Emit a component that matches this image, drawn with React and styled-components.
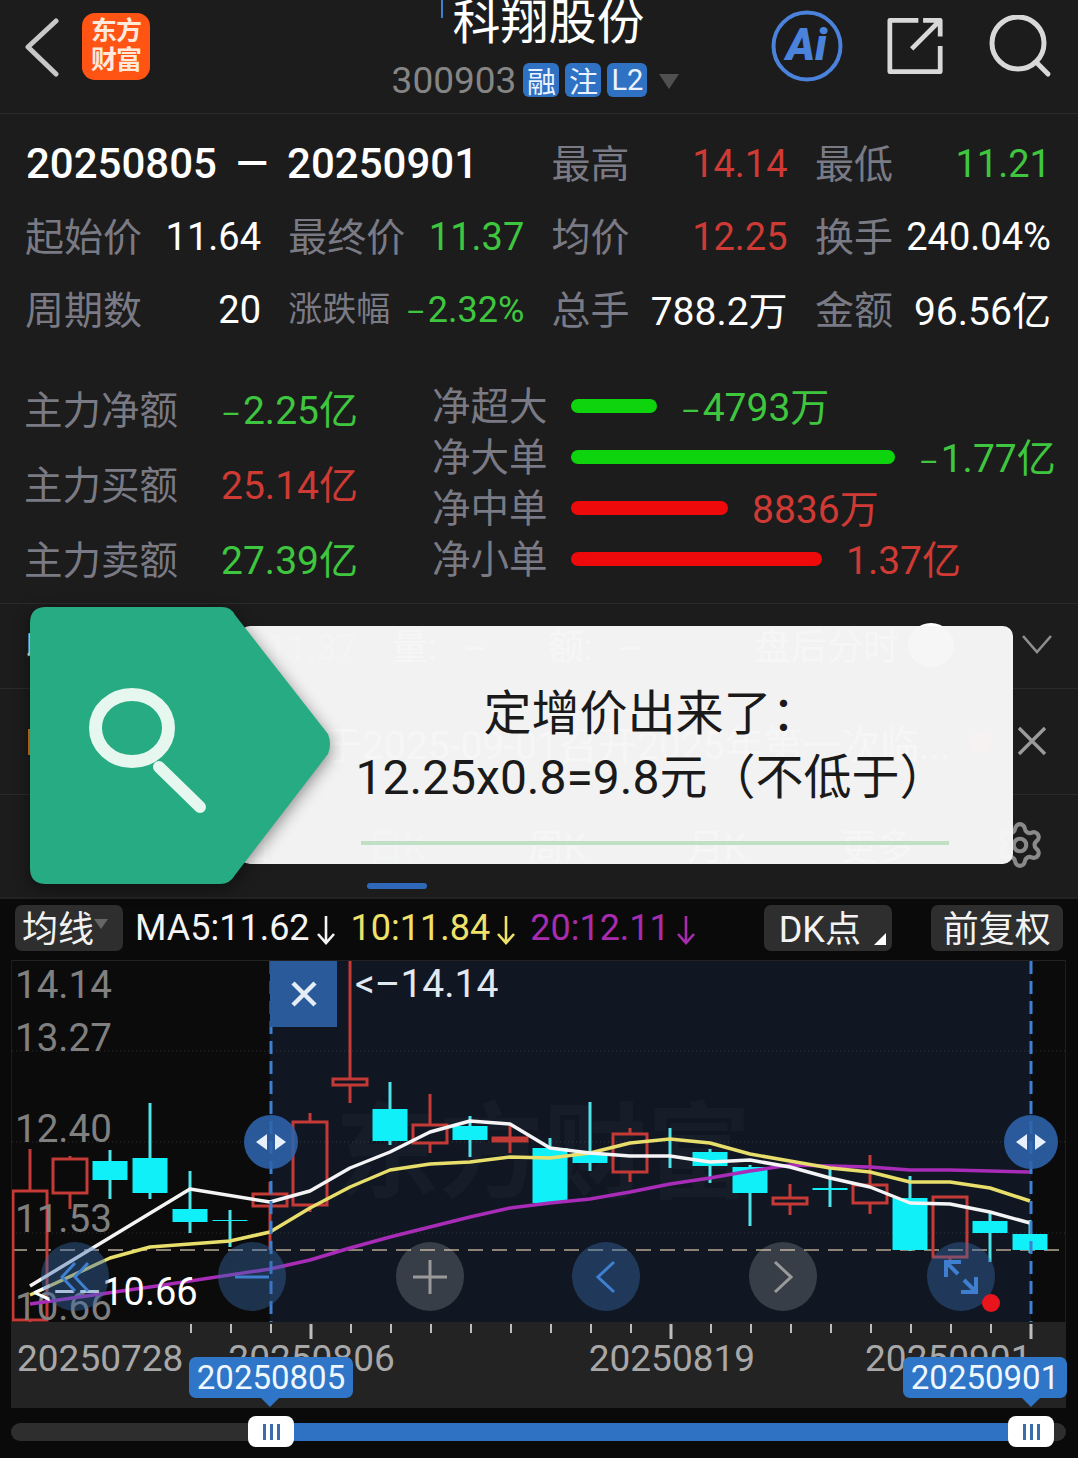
import React from 'react'
import styled, { createGlobalStyle } from 'styled-components'
import { Settings } from 'lucide-react'

const GlobalStyle = createGlobalStyle`
  html, body { margin: 0; padding: 0; background: #0a0a0a; }
  * { box-sizing: border-box; }
`

const RED = '#cf3a34'
const GREEN = '#3fc63f'
const LABEL = '#7a7a85'

const Page = styled.div`
  position: relative;
  width: 1078px;
  height: 1458px;
  overflow: hidden;
  background: #0a0a0a;
  color: #fff;
  font-family: Roboto, "Noto Sans CJK SC", sans-serif;
`

/* top bar */
const Header = styled.header`
  display: grid;
  grid-template-columns: 392px 289px 1fr;
  height: 114px;
  background: #1c1c1c;
  border-bottom: 1px solid #2b2b2b;
`
const HeaderLeft = styled.div`
  display: flex;
  align-items: flex-start;
  padding: 13px 0 0 24px;
  gap: 23px;
`
const Logo = styled.div`
  width: 68px;
  height: 67px;
  border-radius: 13px;
  background: #ff5414;
  color: #ffe9dc;
  font-size: 26px;
  line-height: 29px;
  font-weight: 700;
  text-align: center;
  padding-top: 4px;
  letter-spacing: -1px;
`
const HeaderCenter = styled.div`
  display: flex;
  flex-direction: column;
  align-items: center;
`
const Title = styled.div`
  position: relative;
  font-size: 48px;
  line-height: 46px;
  height: 44px;
  margin-left: 24px;
  color: #fff;
  &::before {
    content: '';
    position: absolute;
    left: -11px;
    top: 0;
    width: 2px;
    height: 18px;
    background: #3f7fd0;
  }
`
const CodeRow = styled.div`
  display: flex;
  align-items: center;
  gap: 6px;
  margin: 19px 2px 0 0;
  height: 34px;
`
const Code = styled.span`
  font-size: 37px;
  color: #858585;
  margin-right: 1px;
`
const Badge = styled.span`
  display: flex;
  align-items: center;
  justify-content: center;
  width: ${p => p.$w || 36}px;
  height: 34px;
  border-radius: 6px;
  background: #2f72c4;
  color: #eaf3ff;
  font-size: 29px;
`
const DownTriangle = styled.span`
  width: 0;
  height: 0;
  margin: 2px 0 0 6px;
  border-left: 10px solid transparent;
  border-right: 10px solid transparent;
  border-top: 15px solid #505050;
`
const HeaderRight = styled.div`
  display: flex;
  align-items: flex-start;
  gap: 44px;
  padding: 10px 0 0 90px;
`

/* range summary */
const Stats = styled.section`
  display: grid;
  grid-template-columns: repeat(4, 236px);
  grid-auto-rows: 73px;
  column-gap: 27.3px;
  height: 233px;
  padding: 13px 0 0 25px;
  background: #1c1c1c;
`
const DateRange = styled.div`
  grid-column: span 2;
  display: flex;
  align-items: center;
  padding-left: 1px;
  font-size: 42px;
  font-weight: 500;
  white-space: pre;
  word-spacing: -1px;
`
const Stat = styled.div`
  display: flex;
  align-items: center;
  justify-content: space-between;
  font-size: 38px;
  white-space: nowrap;
`
const Label = styled.span`
  padding-bottom: 6px;
  color: ${LABEL};
  font-size: ${p => p.$size || 39}px;
`
const Value = styled.span`
  padding-bottom: ${p => p.$lift || 0}px;
  color: ${p => p.$color || '#fff'};
  font-size: ${p => p.$size ? `${p.$size}px` : 'inherit'};
`
const Dash = styled.span`
  font-size: 30px;
  margin-right: 2px;
`

/* capital flow */
const Flow = styled.section`
  display: grid;
  grid-template-columns: 408px 1fr;
  height: 256px;
  padding: 25px 0 0 24px;
  background: #1c1c1c;
  font-size: 39px;
`
const FlowLeft = styled.div`
  display: grid;
  grid-auto-rows: 75px;
  width: 334px;
`
const FlowRight = styled.div`
  display: grid;
  grid-auto-rows: 51px;
  margin-top: 8px;
`
const FlowRow = styled.div`
  display: flex;
  align-items: center;
  justify-content: ${p => p.$spread ? 'space-between' : 'flex-start'};
  white-space: nowrap;
`
const FlowLabel = styled(Label)`
  width: 139px;
`
const Bar = styled.span`
  width: ${p => p.$w}px;
  height: 14px;
  margin-right: 24px;
  border-radius: 7px;
  background: ${p => p.$up ? '#ee0a0a' : '#0ed40e'};
`

/* rows behind the note */
const InfoRow = styled.div`
  display: flex;
  align-items: center;
  height: ${p => p.$h}px;
  padding-left: 25px;
  background: #1c1c1c;
  border-top: 1px solid #2b2b2b;
  font-size: 36px;
  color: #e6e6e6;
  white-space: nowrap;
`
const InfoCell = styled.span`
  display: flex;
  align-items: baseline;
  justify-content: space-between;
  width: ${p => p.$w}px;
  margin-left: ${p => p.$ml || 0}px;
  padding-bottom: 5px;
`
const ToggleKnob = styled.span`
  width: 46px;
  height: 44px;
  margin: 0 0 2px 9px;
  border-radius: 50%;
  background: #fff;
`
const NewsTag = styled.span`
  width: 60px;
  height: 26px;
  margin-left: 3px;
  background: #d8741c;
`
const NewsText = styled.span`
  margin-left: 196px;
  width: 668px;
  overflow: hidden;
  font-size: 39px;
`
const NewsDot = styled.span`
  width: 22px;
  height: 22px;
  margin-left: 17px;
  border-radius: 50%;
  background: #e02a2a;
`
const EndIcon = styled.span`
  display: flex;
  margin-left: ${p => p.$ml}px;
  padding-bottom: ${p => p.$pb || 0}px;
`
const TabRow = styled(InfoRow)`
  height: 103px;
  padding: 0;
  align-items: stretch;
`
const Tab = styled.div`
  position: relative;
  display: flex;
  align-items: center;
  justify-content: center;
  width: ${p => p.$w || 160}px;
  padding-bottom: 4px;
  color: ${p => p.$active ? '#3f7fd0' : '#d8d8d8'};
  &::after {
    content: '';
    display: ${p => p.$active ? 'block' : 'none'};
    position: absolute;
    left: 50px;
    bottom: 8px;
    width: 60px;
    height: 6px;
    border-radius: 3px;
    background: #2f68b8;
  }
`
const GearWrap = styled.div`
  display: flex;
  align-items: center;
  margin-left: 38px;
  padding-bottom: 2px;
  color: #8a8a8a;
`

/* indicator toolbar */
const Toolbar = styled.div`
  display: flex;
  align-items: flex-start;
  height: 63px;
  padding: 6px 15px 0 15px;
  background: #0a0a0a;
  border-top: 2px solid #222;
  font-size: 36px;
`
const ToolButton = styled.div`
  position: relative;
  display: flex;
  align-items: center;
  justify-content: center;
  width: ${p => p.$w}px;
  height: 46px;
  margin-left: ${p => p.$ml || 0}px;
  padding: 0 ${p => p.$pr || 0}px 4px 0;
  border-radius: 7px;
  background: #2e2e2e;
  color: #f2f2f2;
`
const CornerMark = styled.span`
  position: absolute;
  right: 6px;
  bottom: 6px;
  width: 0;
  height: 0;
  border-left: 12px solid transparent;
  border-bottom: 12px solid #fff;
`
const SelectMark = styled.span`
  width: 0;
  height: 0;
  margin: 0 0 4px 0;
  border-left: 7px solid transparent;
  border-right: 7px solid transparent;
  border-top: 10px solid #666;
`
const MaValue = styled.span`
  display: flex;
  align-items: center;
  height: 46px;
  margin-left: ${p => p.$ml}px;
  color: ${p => p.$color};
  white-space: nowrap;
`

/* candle chart */
const Chart = styled.div`
  position: relative;
  width: 1055px;
  height: 362px;
  margin-left: 11px;
  background: #0b0b0b;
  border-top: 1px solid #222;
  border-right: 1px solid #1d1d1d;
  border-left: 1px solid #1d1d1d;
`
const ChartSvg = styled.svg`
  display: block;
  position: absolute;
  left: 0;
  top: 0;
  font-family: Roboto, "Noto Sans CJK SC", sans-serif;
`
const CloseBox = styled.div`
  position: absolute;
  left: 258px;
  top: 0;
  width: 67px;
  height: 66px;
  display: flex;
  align-items: center;
  justify-content: center;
  background: #2a5a9a;
`
const Handle = styled.div`
  position: absolute;
  left: ${p => p.$x - 27 - 12}px;
  top: 154px;
  width: 54px;
  height: 54px;
  display: flex;
  align-items: center;
  justify-content: center;
  border-radius: 50%;
  background: rgba(46, 100, 172, 0.88);
`
const RoundButton = styled.div`
  position: absolute;
  left: ${p => p.$x - 34 - 12}px;
  top: 281px;
  width: 68px;
  height: 69px;
  display: flex;
  align-items: center;
  justify-content: center;
  border-radius: 50%;
  background: ${p => p.$blue ? 'rgba(55, 105, 170, 0.42)' : 'rgba(255, 255, 255, 0.17)'};
`
const RedDot = styled.span`
  position: absolute;
  left: 970px;
  top: 333px;
  width: 18px;
  height: 18px;
  border-radius: 50%;
  background: #e8161c;
`

/* date axis */
const Axis = styled.div`
  position: relative;
  width: 1055px;
  height: 86px;
  margin-left: 11px;
  background: #232323;
`
const Ticks = styled.svg`
  display: block;
`
const AxisLabels = styled.div`
  display: flex;
  font-size: 37px;
  line-height: 37px;
  color: #a8a8a8;
`
const AxisLabel = styled.span`
  margin-left: ${p => p.$ml}px;
`
const DateTag = styled.div`
  position: absolute;
  left: ${p => p.$x - 11}px;
  top: 35px;
  width: 164px;
  height: 41px;
  display: flex;
  align-items: center;
  justify-content: center;
  border-radius: 7px;
  background: #2f76c8;
  color: #eef6ff;
  font-size: 33px;
  &::after {
    content: '';
    position: absolute;
    left: ${p => p.$tip}px;
    top: 41px;
    width: 0;
    height: 0;
    border-left: 9px solid transparent;
    border-right: 9px solid transparent;
    border-top: 9px solid #2f76c8;
  }
`

/* range slider */
const SliderArea = styled.div`
  height: 50px;
  padding: 15px 0 0 11px;
`
const Track = styled.div`
  position: relative;
  width: 1055px;
  height: 18px;
  border-radius: 9px;
  background: #2e2e2e;
`
const TrackFill = styled.div`
  position: absolute;
  left: 259px;
  top: 0;
  width: 761px;
  height: 18px;
  background: #2f72c4;
`
const Thumb = styled.div`
  position: absolute;
  left: ${p => p.$x}px;
  top: -7px;
  width: 46px;
  height: 31px;
  display: flex;
  align-items: center;
  justify-content: center;
  gap: 4px;
  border-radius: 8px;
  background: #fff;
  span {
    width: 3px;
    height: 16px;
    background: #3a6ea8;
  }
`

/* pinned note */
const NoteCard = styled.div`
  position: absolute;
  left: 240px;
  top: 626px;
  width: 773px;
  height: 238px;
  padding: 56px 0 0 50px;
  display: flex;
  flex-direction: column;
  align-items: center;
  border-radius: 10px;
  background: rgba(246, 246, 246, 0.985);
  color: #1a1a1a;
  font-size: 48px;
  line-height: 64px;
  white-space: nowrap;
`
const NoteRule = styled.div`
  width: 588px;
  height: 4px;
  margin: 31px 0 0 6px;
  background: #bfe0c4;
`
const NoteBadge = styled.svg`
  position: absolute;
  left: 20px;
  top: 597px;
  filter: drop-shadow(0 4px 8px rgba(0, 0, 0, 0.45));
`

const candles = [
  { c: 30, top: 1191, bot: 1320, hi: 1149, lo: 1323, up: true },
  { c: 70, top: 1159, bot: 1193, hi: 1156, lo: 1209, up: true },
  { c: 110, top: 1161, bot: 1180, hi: 1150, lo: 1199 },
  { c: 150, top: 1158, bot: 1193, hi: 1103, lo: 1199 },
  { c: 190, top: 1209, bot: 1222, hi: 1171, lo: 1233 },
  { c: 230, top: 1220, bot: 1221, hi: 1210, lo: 1247 },
  { c: 270, top: 1194, bot: 1206, hi: 1182, lo: 1250, up: true },
  { c: 310, top: 1122, bot: 1205, hi: 1113, lo: 1212, up: true },
  { c: 350, top: 1079, bot: 1085, hi: 961, lo: 1103, up: true },
  { c: 390, top: 1109, bot: 1141, hi: 1082, lo: 1145 },
  { c: 430, top: 1125, bot: 1143, hi: 1094, lo: 1153, up: true },
  { c: 470, top: 1126, bot: 1140, hi: 1116, lo: 1157 },
  { c: 510, top: 1138, bot: 1141, hi: 1125, lo: 1153, up: true },
  { c: 550, top: 1148, bot: 1203, hi: 1138, lo: 1203 },
  { c: 590, top: 1153, bot: 1163, hi: 1102, lo: 1171 },
  { c: 630, top: 1134, bot: 1172, hi: 1128, lo: 1182, up: true },
  { c: 670, top: 1140, bot: 1140, hi: 1128, lo: 1168, thin: true },
  { c: 710, top: 1152, bot: 1166, hi: 1149, lo: 1183 },
  { c: 750, top: 1167, bot: 1193, hi: 1165, lo: 1226 },
  { c: 790, top: 1198, bot: 1204, hi: 1184, lo: 1215, up: true },
  { c: 830, top: 1188, bot: 1190, hi: 1169, lo: 1207 },
  { c: 870, top: 1185, bot: 1203, hi: 1155, lo: 1214, up: true },
  { c: 910, top: 1198, bot: 1250, hi: 1176, lo: 1251 },
  { c: 950, top: 1197, bot: 1257, hi: 1197, lo: 1262, up: true },
  { c: 990, top: 1221, bot: 1233, hi: 1213, lo: 1262 },
  { c: 1030, top: 1234, bot: 1250, hi: 1220, lo: 1253 },
]

const ma5 = '30,1286 190,1189 270,1202 310,1191 350,1168 390,1152 430,1132 470,1121 510,1124 550,1148 590,1153 630,1156 670,1156 710,1162 750,1160 790,1167 830,1178 870,1187 910,1203 950,1204 990,1212 1030,1223'
const ma10 = '30,1295 110,1258 150,1247 230,1241 270,1232 310,1208 350,1187 390,1170 430,1164 470,1162 510,1157 550,1158 590,1153 630,1143 670,1139 710,1143 750,1154 790,1161 830,1168 870,1172 910,1182 950,1182 990,1188 1030,1201'
const ma20 = '30,1304 150,1287 270,1269 310,1260 350,1248 390,1237 430,1227 470,1217 510,1208 550,1203 590,1199 630,1192 670,1184 710,1178 750,1171 790,1165 830,1166 870,1167 910,1170 950,1170 990,1171 1030,1172'

const priceLabels = [
  ['14.14', 998],
  ['13.27', 1051],
  ['12.40', 1142],
  ['11.53', 1232],
  ['10.66', 1320],
]

const Candle = ({ c, top, bot, hi, lo, up, thin }) => {
  const wick = up ? '#c43a36' : '#4fe3ea'
  return (
    <g>
      <line x1={c} x2={c} y1={hi} y2={top} stroke={wick} strokeWidth="3" />
      <line x1={c} x2={c} y1={bot} y2={lo} stroke={wick} strokeWidth="3" />
      {up && <rect x={c - 17} y={top} width="34" height={bot - top} fill="none" stroke={wick} strokeWidth="3" />}
      {!up && !thin && <rect x={c - 17.5} y={top} width="35" height={bot - top} fill="#0ff0f8" />}
    </g>
  )
}

const ArrowDown = ({ color }) => (
  <svg width="20" height="32" viewBox="0 0 20 32" style={{ margin: '4px 3px 0 6px' }}>
    <path d="M10 2V29M2 20l8 9 8-9" fill="none" stroke={color} strokeWidth="2.6" />
  </svg>
)

const HandleIcon = () => (
  <svg width="30" height="16" viewBox="0 0 30 16">
    <path d="M11 0V16L0 8ZM19 0V16L30 8Z" fill="#e8f1fb" />
  </svg>
)

const ChartDrawing = () => (
  <ChartSvg width="1053" height="361" viewBox="12 961 1053 361">
    <rect x="270" y="961" width="761" height="361" fill="#101722" />
    <text x="335" y="1190" fontSize="104" fontWeight="700" fill="#ffffff" fillOpacity="0.026">东方财富</text>
    {[1051, 1142, 1233].map(y => (
      <line key={y} x1="12" x2="1065" y1={y} y2={y} stroke="#fff" strokeOpacity="0.14" strokeDasharray="1 3" />
    ))}
    <line x1="12" x2="1065" y1="1250" y2="1250" stroke="#8d8375" strokeWidth="2" strokeDasharray="15 9" />
    {candles.map(item => <Candle key={item.c} {...item} />)}
    <line x1="670" x2="670" y1="1140" y2="1141" stroke="#4fe3ea" strokeWidth="3" />
    <g fontSize="38.6" fill="#808080">
      {priceLabels.map(([text, y]) => <text key={text} x="15" y={y}>{text}</text>)}
    </g>
    <polyline points={ma20} fill="none" stroke="#a82cb8" strokeWidth="3.5" strokeLinejoin="round" />
    <polyline points={ma10} fill="none" stroke="#e8de6c" strokeWidth="3.5" strokeLinejoin="round" />
    <polyline points={ma5} fill="none" stroke="#f4f4f6" strokeWidth="3.5" strokeLinejoin="round" />
    <text x="355" y="997" fontSize="39" fill="#e2e8f0">{'<–14.14'}</text>
    <text x="33" y="1305" fontSize="38" fill="#fff">{'<––10.66'}</text>
    <g stroke="#3f7fd0" strokeWidth="3" strokeDasharray="13 7">
      <line x1="271" x2="271" y1="961" y2="1322" />
      <line x1="1031" x2="1031" y1="961" y2="1322" />
    </g>
  </ChartSvg>
)

const tickXs = Array.from({ length: 22 }, (_, i) => 191 + i * 40)

export default function App() {
  return (
    <Page>
      <GlobalStyle />
      <Header>
        <HeaderLeft>
          <svg width="35" height="60" viewBox="0 0 35 60" style={{ marginTop: 5 }}>
            <path d="M32 3L4 29L32 56" fill="none" stroke="#c8c8c8" strokeWidth="5" strokeLinecap="round" strokeLinejoin="round" />
          </svg>
          <Logo>东方<br />财富</Logo>
        </HeaderLeft>
        <HeaderCenter>
          <Title>科翔股份</Title>
          <CodeRow>
            <Code>300903</Code>
            <Badge>融</Badge>
            <Badge>注</Badge>
            <Badge $w={40}>L2</Badge>
            <DownTriangle />
          </CodeRow>
        </HeaderCenter>
        <HeaderRight>
          <svg width="72" height="72" viewBox="0 0 72 72">
            <circle cx="36" cy="36" r="33.5" fill="none" stroke="#4a82dc" strokeWidth="4" />
            <text x="15" y="50" fontSize="44" fontWeight="900" fontStyle="italic" fill="#4a82dc" fontFamily="Roboto, sans-serif">Ai</text>
          </svg>
          <svg width="57" height="58" viewBox="0 0 60 60" style={{ marginTop: 7 }}>
            <path d="M33 3H3V57H56V30M26 33L55 4M38 3H56V20" fill="none" stroke="#d8d8d8" strokeWidth="5" strokeLinejoin="round" />
          </svg>
          <svg width="66" height="66" viewBox="0 0 66 66" style={{ marginTop: 5 }}>
            <circle cx="30" cy="28" r="26" fill="none" stroke="#d8d8d8" strokeWidth="5" />
            <path d="M48 47L60 59" stroke="#d8d8d8" strokeWidth="5" strokeLinecap="round" />
          </svg>
        </HeaderRight>
      </Header>

      <Stats>
        <DateRange>20250805  —  20250901</DateRange>
        <Stat><Label>最高</Label><Value $color={RED}>14.14</Value></Stat>
        <Stat><Label>最低</Label><Value $color={GREEN}>11.21</Value></Stat>
        <Stat><Label>起始价</Label><Value>11.64</Value></Stat>
        <Stat><Label>最终价</Label><Value $color={GREEN}>11.37</Value></Stat>
        <Stat><Label>均价</Label><Value $color={RED}>12.25</Value></Stat>
        <Stat><Label>换手</Label><Value>240.04%</Value></Stat>
        <Stat><Label>周期数</Label><Value>20</Value></Stat>
        <Stat><Label $size={34}>涨跌幅</Label><Value $color={GREEN} $size={36}><Dash>–</Dash>2.32%</Value></Stat>
        <Stat><Label>总手</Label><Value $size={39} $lift={4}>788.2万</Value></Stat>
        <Stat><Label>金额</Label><Value $size={39} $lift={4}>96.56亿</Value></Stat>
      </Stats>

      <Flow>
        <FlowLeft>
          <FlowRow $spread><Label $size={38.5}>主力净额</Label><Value $color={GREEN} $lift={6}><Dash>–</Dash>2.25亿</Value></FlowRow>
          <FlowRow $spread><Label $size={38.5}>主力买额</Label><Value $color={RED} $lift={6}>25.14亿</Value></FlowRow>
          <FlowRow $spread><Label $size={38.5}>主力卖额</Label><Value $color={GREEN} $lift={6}>27.39亿</Value></FlowRow>
        </FlowLeft>
        <FlowRight>
          <FlowRow><FlowLabel $size={38.5}>净超大</FlowLabel><Bar $w={86} /><Value $color={GREEN} $lift={4}><Dash>–</Dash>4793万</Value></FlowRow>
          <FlowRow><FlowLabel $size={38.5}>净大单</FlowLabel><Bar $w={324} /><Value $color={GREEN} $lift={4}><Dash>–</Dash>1.77亿</Value></FlowRow>
          <FlowRow><FlowLabel $size={38.5}>净中单</FlowLabel><Bar $w={157} $up /><Value $color={RED} $lift={4}>8836万</Value></FlowRow>
          <FlowRow><FlowLabel $size={38.5}>净小单</FlowLabel><Bar $w={251} $up /><Value $color={RED} $lift={4}>1.37亿</Value></FlowRow>
        </FlowRight>
      </Flow>

      <InfoRow $h={85}>
        <InfoCell $w={332}><span>收盘价:</span><Value $color={GREEN}>11.37</Value></InfoCell>
        <InfoCell $w={93} $ml={35}><span>量:</span><span>--</span></InfoCell>
        <InfoCell $w={92} $ml={63}><span>额:</span><span>--</span></InfoCell>
        <InfoCell $w={144} $ml={115}>盘后分时</InfoCell>
        <ToggleKnob />
        <EndIcon $ml={68} $pb={4}>
          <svg width="30" height="20" viewBox="0 0 30 20">
            <path d="M1 2L15 18L29 2" fill="none" stroke="#8e8e8e" strokeWidth="2.6" />
          </svg>
        </EndIcon>
      </InfoRow>

      <InfoRow $h={106}>
        <NewsTag />
        <NewsText>关于2025-09-01召开2025年第一次临...</NewsText>
        <NewsDot />
        <EndIcon $ml={26} $pb={2}>
          <svg width="30" height="30" viewBox="0 0 30 30">
            <path d="M2 2L28 28M28 2L2 28" stroke="#9a9a9a" strokeWidth="3.4" />
          </svg>
        </EndIcon>
      </InfoRow>

      <TabRow>
        <Tab $w={157}>分时</Tab>
        <Tab>五日</Tab>
        <Tab $active>日K</Tab>
        <Tab>周K</Tab>
        <Tab>月K</Tab>
        <Tab>更多</Tab>
        <GearWrap><Settings size={50} strokeWidth={2} /></GearWrap>
      </TabRow>

      <Toolbar>
        <ToolButton $w={108} $pr={8}>均线<SelectMark /></ToolButton>
        <MaValue $ml={12} $color="#f4f4f4">MA5:11.62<ArrowDown color="#f4f4f4" /></MaValue>
        <MaValue $ml={12} $color="#efe26a">10:11.84<ArrowDown color="#efe26a" /></MaValue>
        <MaValue $ml={11} $color="#a82cae">20:12.11<ArrowDown color="#a82cae" /></MaValue>
        <ToolButton $w={128} $ml={65} $pr={16}>DK点<CornerMark /></ToolButton>
        <ToolButton $w={132} $ml={39}>前复权</ToolButton>
      </Toolbar>

      <Chart>
        <ChartDrawing />
        <CloseBox>
          <svg width="26" height="26" viewBox="0 0 26 26">
            <path d="M2 2L24 24M24 2L2 24" stroke="#e4ecf6" strokeWidth="4.5" />
          </svg>
        </CloseBox>
        <Handle $x={271}><HandleIcon /></Handle>
        <Handle $x={1031}><HandleIcon /></Handle>
        <RoundButton $x={75} $blue>
          <svg width="30" height="32" viewBox="0 0 30 32">
            <path d="M15 2L2 16L15 30M28 2L15 16L28 30" fill="none" stroke="#3f7fd0" strokeWidth="3" />
          </svg>
        </RoundButton>
        <RoundButton $x={252} $blue>
          <svg width="34" height="4" viewBox="0 0 34 4"><path d="M0 2H34" stroke="#3f7fd0" strokeWidth="3" /></svg>
        </RoundButton>
        <RoundButton $x={430}>
          <svg width="34" height="34" viewBox="0 0 34 34"><path d="M0 17H34M17 0V34" stroke="#9a9a9a" strokeWidth="3" /></svg>
        </RoundButton>
        <RoundButton $x={606} $blue>
          <svg width="20" height="34" viewBox="0 0 20 34"><path d="M18 2L2 17L18 32" fill="none" stroke="#3f7fd0" strokeWidth="3" /></svg>
        </RoundButton>
        <RoundButton $x={783}>
          <svg width="20" height="34" viewBox="0 0 20 34"><path d="M2 2L18 17L2 32" fill="none" stroke="#9a9a9a" strokeWidth="3" /></svg>
        </RoundButton>
        <RoundButton $x={961} $blue>
          <svg width="36" height="36" viewBox="0 0 36 36">
            <path d="M3 3L15 15M3 18V3H18M33 33L21 21M33 18V33H18" fill="none" stroke="#3f7fd0" strokeWidth="4" />
          </svg>
        </RoundButton>
        <RedDot />
      </Chart>

      <Axis>
        <Ticks width="1055" height="18" viewBox="11 0 1055 18">
          {tickXs.map(x => {
            const major = (x - 311) % 360 === 0
            return <line key={x} x1={x} x2={x} y1="2" y2={major ? 17 : 11} stroke="#bdbdbd" strokeWidth={major ? 3 : 2} />
          })}
        </Ticks>
        <AxisLabels>
          <AxisLabel $ml={6}>20250728</AxisLabel>
          <AxisLabel $ml={45}>20250806</AxisLabel>
          <AxisLabel $ml={194}>20250819</AxisLabel>
          <AxisLabel $ml={110}>20250901</AxisLabel>
        </AxisLabels>
        <DateTag $x={189} $tip={72}>20250805</DateTag>
        <DateTag $x={903} $tip={119}>20250901</DateTag>
      </Axis>

      <SliderArea>
        <Track>
          <TrackFill />
          <Thumb $x={237}><span /><span /><span /></Thumb>
          <Thumb $x={997}><span /><span /><span /></Thumb>
        </Track>
      </SliderArea>

      <NoteCard>
        <div>定增价出来了：</div>
        <div>12.25x0.8=9.8元（不低于）</div>
        <NoteRule />
      </NoteCard>
      <NoteBadge width="322" height="297" viewBox="0 0 322 297">
        <path d="M26 10H202Q211 10 215 18L308 137Q312 147 308 157L215 278Q210 287 200 287H26Q10 287 10 271V26Q10 10 26 10Z" fill="#26ab82" />
        <ellipse cx="112" cy="131" rx="36.5" ry="33.5" fill="none" stroke="#e6f7f0" strokeWidth="13" />
        <path d="M139 170L180 210" stroke="#e6f7f0" strokeWidth="12" strokeLinecap="round" />
      </NoteBadge>
    </Page>
  )
}
